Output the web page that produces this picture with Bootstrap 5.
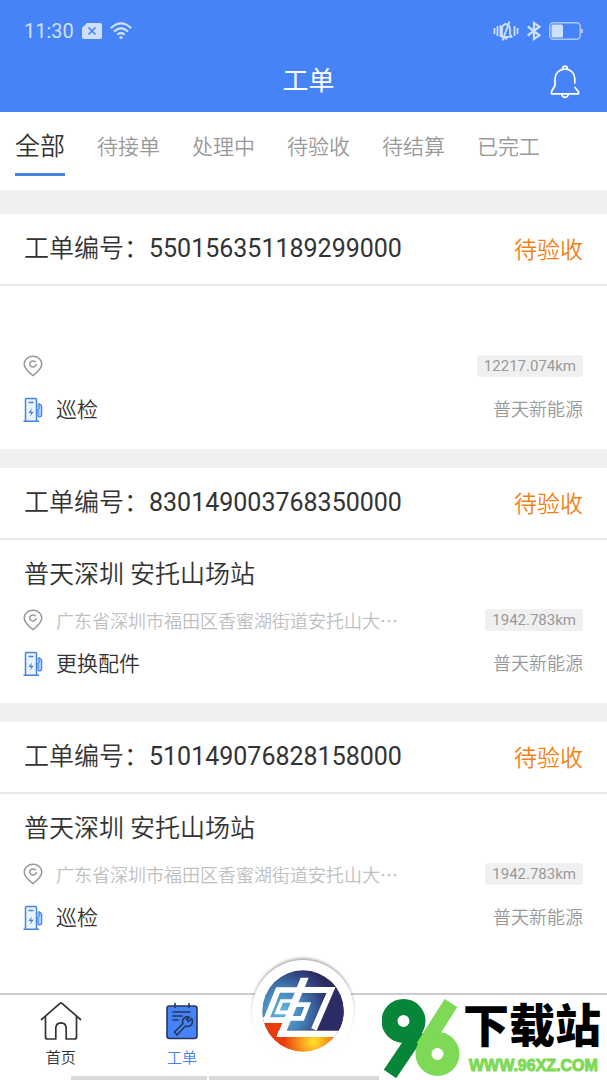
<!DOCTYPE html>
<html lang="zh-CN">
<head>
<meta charset="utf-8">
<meta name="viewport" content="width=device-width, initial-scale=1">
<title>工单</title>
<link rel="stylesheet" href="https://cdn.jsdelivr.net/npm/bootstrap@5.3.0/dist/css/bootstrap.min.css">
<style>
  body { font-family: Roboto, "Noto Sans CJK SC", sans-serif; font-weight: 350; color: #333; background: #fff; }
  .app-top { background: #4583f7; color: #fff; }
  .status-bar { height: 50px; padding: 12px 24px 0; color: #cfe0ff; font-size: 20px; font-weight: 400; }
  .title-bar { height: 62px; padding: 2px 26px 0 36px; }
  .title-bar h1 { font-size: 26px; font-weight: 400; }
  .tabs { height: 78px; padding: 0 15px; gap: 32px; }
  .tabs a { font-size: 21px; line-height: 30px; color: #999; text-decoration: none; white-space: nowrap; padding: 20px 0 14px; }
  .tabs a.active { font-size: 25px; color: #333; padding-bottom: 11px; border-bottom: 3px solid #4583de; }
  .orders { background: #f0f0f0; padding-top: 24px; gap: 19px; }
  .order { background: #fff; }
  .order-head { height: 72px; padding: 0 24px; border-bottom: 2px solid #e8e8e8; font-size: 25px; }
  .order-head h2 { font-size: 25px; font-weight: 350; line-height: 38px; }
  .order-no { font-weight: 400; }
  .order-state { font-size: 23px; line-height: 30px; color: #f57f17; padding-top: 4px; }
  .order-body { padding: 16px 24px 24px; }
  .site-name { font-size: 25px; line-height: 38px; height: 38px; font-weight: 350; margin-bottom: 14px; }
  .addr-row { height: 24px; margin-bottom: 17px; }
  .addr { font-family: "Noto Sans CJK SC", sans-serif; font-size: 18px; line-height: 24px; color: #c0c0c0; }
  .ico-col { width: 32px; }
  .ico-col svg { margin-left: -1px; }
  .dist { font-size: 15px; font-weight: 400; line-height: 22px; padding: 0 7px; background: #f0f0f0; color: #999; border-radius: 3px; }
  .job-row { height: 30px; font-size: 21px; line-height: 30px; }
  .owner { font-size: 18px; color: #999; }
  .bottom-nav { height: 87px; border-top: 2px solid #ccc; background: #fff; }
  .bottom-nav a { color: #333; text-decoration: none; font-size: 15px; line-height: 20px; padding-top: 6px; }
  .bottom-nav a.active { color: #4583f7; }
  .bottom-nav a svg { margin-bottom: 7px; }
  .hub { top: -39px; }
  .home-bar { left: 71px; right: 0; bottom: 0; height: 4px; gap: 2px; }
  .home-bar span { background: #d9d9d9; }
  .home-bar span:first-child { width: 136px; }
  .stamp { right: 0; bottom: 0; width: 228px; height: 83px; background: #fff; padding: 1px 0 0 3px; gap: 3px; }
  .stamp-name { font-size: 46px; line-height: 56px; font-weight: 900; color: #000; white-space: nowrap; }
  .stamp-url { font-family: "Liberation Sans", sans-serif; font-size: 16px; line-height: 24px; font-weight: 700; color: #7ed957; -webkit-text-stroke: 1px #7ed957; padding-left: 6px; }
</style>
</head>
<body class="d-flex flex-column min-vh-100">

<svg class="d-none" aria-hidden="true">
  <symbol id="pin" viewBox="0 0 20 22">
    <path d="M10 20.600C6 17.500 1.200 13.500 1.200 9A8.800 7.800 0 0 1 18.800 9C18.800 13.500 14 17.500 10 20.600Z" fill="none" stroke="#999" stroke-width="1.500"/>
    <path d="M12.800 7.300A3.300 3 0 1 0 13.300 9" fill="none" stroke="#999" stroke-width="1.500"/>
  </symbol>
  <symbol id="pump" viewBox="0 0 20 26">
    <path d="M2.500 24V2.500Q2.500 1.500 3.500 1.500H12.500Q13.500 1.500 13.500 2.500V24M0.500 24.200H16" fill="#eaf4ff" stroke="#4583e0" stroke-width="1.500"/>
    <path d="M5.500 5.500H10.500" stroke="#4583e0" stroke-width="1.500"/>
    <path d="M8.800 11.500L5.500 16H8L7.200 19.500L10.700 14.800H8.200Z" fill="#4583e0"/>
    <path d="M13.500 8H15M16 6V12M16 7Q18.700 7.500 18.700 10V17Q18.700 20 16.700 20Q15 20 15 18V12.500H13.500" fill="#a9cfff" stroke="#4583e0" stroke-width="1.200"/>
  </symbol>
</svg>

<header class="app-top">
  <div class="status-bar d-flex align-items-center justify-content-between">
    <div class="d-flex align-items-center">
      <span>11:30</span>
      <svg class="ms-2" width="20" height="16" viewBox="0 0 20 16"><path d="M5 0H18Q20 0 20 2V14Q20 16 18 16H2Q0 16 0 14V5Z" fill="#cfe0ff"/><path d="M6.500 4.500L13.500 11.500M13.500 4.500L6.500 11.500" stroke="#4583f7" stroke-width="1.700"/></svg>
      <svg class="ms-1 ps-1" width="26" height="18" viewBox="0 0 22 18" fill="none" stroke="#cfe0ff" stroke-width="2.200"><path d="M0.800 6.200Q11-3.500 21.200 6.200M4 9.500Q11 3 18 9.500M7.300 12.700Q11 9.300 14.700 12.700"/><circle cx="11" cy="15.500" r="1.600" fill="#cfe0ff" stroke="none"/></svg>
    </div>
    <div class="d-flex align-items-center gap-2">
      <svg width="26" height="20" viewBox="0 0 26 20" fill="none" stroke="#cfe0ff" stroke-width="1.800"><path d="M1.500 7V13M4.500 5V15M21.500 5V15M24.500 7V13M7.500 4V16M9 15.500V8.500Q9 3.500 13 3Q17 3.500 17 8.500V13L18.500 15.800H8.500M16.500 0.500L9.500 19.500M11.500 17.500H14.500"/></svg>
      <svg width="14" height="20" viewBox="0 0 14 20" fill="none" stroke="#cfe0ff" stroke-width="2.200"><path d="M0.800 5.500L12.500 14.300L7 18V2L12.500 5.700L0.800 14.500"/></svg>
      <svg width="34" height="18" viewBox="0 0 34 18"><rect x=".8" y=".8" width="30.400" height="16.400" rx="3.500" fill="none" stroke="#a9c8ff" stroke-width="1.500"/><rect x="2.500" y="2.500" width="11.500" height="13" rx="1.500" fill="#cfe0ff"/><path d="M33 7V11" stroke="#a9c8ff" stroke-width="2"/></svg>
    </div>
  </div>
  <div class="title-bar d-flex align-items-center">
    <div class="flex-fill w-25"></div>
    <h1 class="m-0">工单</h1>
    <div class="flex-fill w-25 text-end">
      <button type="button" class="btn p-0 border-0 lh-1" aria-label="通知">
        <svg width="32" height="34" viewBox="0 0 32 34" fill="none" stroke="#fff" stroke-width="1.700" stroke-linecap="round" stroke-linejoin="round"><path d="M25.800 18V13.500Q25.500 5 16 4Q6.500 5 6 13.500V20.500L2.500 26.500V28.800H29.500V26.800L26 22.500M13.500 4Q13.500 1.200 16 1.200T18.500 4M12.800 29Q13 32.300 16 32.300T19.200 29"/></svg>
      </button>
    </div>
  </div>
</header>

<nav class="tabs d-flex align-items-start" aria-label="工单状态">
  <a href="#" class="active" aria-current="page">全部</a>
  <a href="#">待接单</a>
  <a href="#">处理中</a>
  <a href="#">待验收</a>
  <a href="#">待结算</a>
  <a href="#">已完工</a>
</nav>

<main class="orders d-flex flex-column flex-grow-1">
  <article class="order">
    <div class="order-head d-flex align-items-center justify-content-between">
      <h2 class="m-0">工单编号：<span class="order-no">550156351189299000</span></h2>
      <span class="order-state">待验收</span>
    </div>
    <div class="order-body">
      <h3 class="site-name"></h3>
      <div class="addr-row d-flex align-items-center">
        <span class="ico-col d-flex"><svg width="20" height="22"><use href="#pin"/></svg></span>
        <span class="dist ms-auto">12217.074km</span>
      </div>
      <div class="job-row d-flex align-items-center">
        <span class="ico-col d-flex"><svg width="20" height="26"><use href="#pump"/></svg></span>
        <span>巡检</span>
        <span class="owner ms-auto">普天新能源</span>
      </div>
    </div>
  </article>

  <article class="order">
    <div class="order-head d-flex align-items-center justify-content-between">
      <h2 class="m-0">工单编号：<span class="order-no">830149003768350000</span></h2>
      <span class="order-state">待验收</span>
    </div>
    <div class="order-body">
      <h3 class="site-name">普天深圳 安托山场站</h3>
      <div class="addr-row d-flex align-items-center">
        <span class="ico-col d-flex"><svg width="20" height="22"><use href="#pin"/></svg></span>
        <span class="addr">广东省深圳市福田区香蜜湖街道安托山大…</span>
        <span class="dist ms-auto">1942.783km</span>
      </div>
      <div class="job-row d-flex align-items-center">
        <span class="ico-col d-flex"><svg width="20" height="26"><use href="#pump"/></svg></span>
        <span>更换配件</span>
        <span class="owner ms-auto">普天新能源</span>
      </div>
    </div>
  </article>

  <article class="order flex-grow-1">
    <div class="order-head d-flex align-items-center justify-content-between">
      <h2 class="m-0">工单编号：<span class="order-no">510149076828158000</span></h2>
      <span class="order-state">待验收</span>
    </div>
    <div class="order-body">
      <h3 class="site-name">普天深圳 安托山场站</h3>
      <div class="addr-row d-flex align-items-center">
        <span class="ico-col d-flex"><svg width="20" height="22"><use href="#pin"/></svg></span>
        <span class="addr">广东省深圳市福田区香蜜湖街道安托山大…</span>
        <span class="dist ms-auto">1942.783km</span>
      </div>
      <div class="job-row d-flex align-items-center">
        <span class="ico-col d-flex"><svg width="20" height="26"><use href="#pump"/></svg></span>
        <span>巡检</span>
        <span class="owner ms-auto">普天新能源</span>
      </div>
    </div>
  </article>
</main>

<footer class="bottom-nav position-relative">
  <div class="home-bar position-absolute d-flex"><span></span><span class="flex-fill"></span></div>
  <nav class="row g-0 row-cols-5" aria-label="主导航">
    <a href="#" class="col d-flex flex-column align-items-center">
      <svg width="42" height="40" viewBox="0 0 42 40" fill="none" stroke="#333" stroke-width="1.700" stroke-linecap="round" stroke-linejoin="round"><path d="M1.500 18.500L20 2.300Q21 1.500 22 2.300L40.500 18.500M5.500 15.500V36Q5.500 38 7.500 38H15.800V27Q16 22 21 21.800Q26 22 26.200 27V38H34.500Q36.500 38 36.500 36V15.500"/></svg>
      首页
    </a>
    <a href="#" class="col d-flex flex-column align-items-center active" aria-current="page">
      <svg width="34" height="40" viewBox="0 0 34 40" stroke="#27365c" stroke-width="1.600" stroke-linejoin="round" stroke-linecap="round"><rect x="2" y="5" width="30" height="32.500" rx="2.500" fill="#4583f7"/><path d="M10 2.500V6.500M24 2.500V6.500M8 11H25M8 15H17M8 19H13" fill="none"/><path d="M26.500 17.500L23.500 20.500L21.500 18.500L24.500 16.200Q20 15 18 18.500Q17 20.500 18 22.500L9.500 31L12 34L20.500 25Q24.500 26.500 26.800 23.200Q28.200 20 26.500 17.500Z" fill="#4583f7"/></svg>
      工单
    </a>
    <div class="col d-flex justify-content-center position-relative">
      <button type="button" class="hub btn border-0 p-0 position-absolute lh-1" aria-label="普天">
        <svg width="110" height="110" viewBox="59 48 330 330">
          <defs>
            <radialGradient id="sky" gradientUnits="userSpaceOnUse" cx="160" cy="215" r="165"><stop offset="0" stop-color="#65b9e4"/><stop offset=".4" stop-color="#4583b8"/><stop offset=".75" stop-color="#31427f"/><stop offset="1" stop-color="#282557"/></radialGradient>
            <radialGradient id="sun" gradientUnits="userSpaceOnUse" cx="256" cy="304" r="90"><stop offset="0" stop-color="#ffe32a"/><stop offset=".45" stop-color="#f99a1c"/><stop offset="1" stop-color="#e73d0c"/></radialGradient>
            <clipPath id="disc"><circle cx="224" cy="213" r="122"/></clipPath>
            <filter id="soft"><feGaussianBlur stdDeviation="5"/></filter>
          </defs>
          <circle cx="224" cy="206" r="151" fill="#000" opacity=".35" filter="url(#soft)"/>
          <circle cx="224" cy="213" r="153" fill="#fff"/>
          <g clip-path="url(#disc)">
            <rect x="100" y="90" width="250" height="190" fill="url(#sky)"/>
            <path d="M100 249H350V340H100Z" fill="url(#sun)"/>
            <path d="M100 232H350V272H168L178 249H100Z" fill="url(#sky)"/>
            <path d="M305 90H350V272H262Z" fill="#2b2c64"/>
            <path d="M217 113H241L167 291H145Z" fill="#fff"/>
            <path d="M100 232H184L177 249H100Z" fill="#fff"/>
            <path d="M150 272H345V291H145Z" fill="#fff"/>
            <g fill="none" stroke="#fff">
              <path d="M212 150H149L114 238" stroke-width="17"/>
              <path d="M200 183H160L146 217H185" stroke-width="11"/>
              <path d="M200 194H238L222 235H178" stroke-width="14"/>
              <path d="M222 150H308L257 268" stroke-width="18"/>
            </g>
          </g>
        </svg>
      </button>
    </div>
  </nav>
  <div class="stamp position-absolute d-flex">
    <svg class="flex-shrink-0" width="78" height="80" viewBox="0 0 78 80" role="img" aria-label="96">
      <g fill="none"><circle cx="21.500" cy="23" r="14" stroke="#078539" stroke-width="16"/><line x1="37" y1="33" x2="8" y2="76" stroke="#078539" stroke-width="15"/><line x1="69" y1="5" x2="41" y2="49" stroke="#7ed957" stroke-width="15"/><circle cx="55.500" cy="56" r="14" stroke="#7ed957" stroke-width="16"/></g>
    </svg>
    <div>
      <div class="stamp-name">下载站</div>
      <div class="stamp-url">WWW.96XZ.COM</div>
    </div>
  </div>
</footer>

<script src="https://cdn.jsdelivr.net/npm/bootstrap@5.3.0/dist/js/bootstrap.bundle.min.js"></script>
</body>
</html>
